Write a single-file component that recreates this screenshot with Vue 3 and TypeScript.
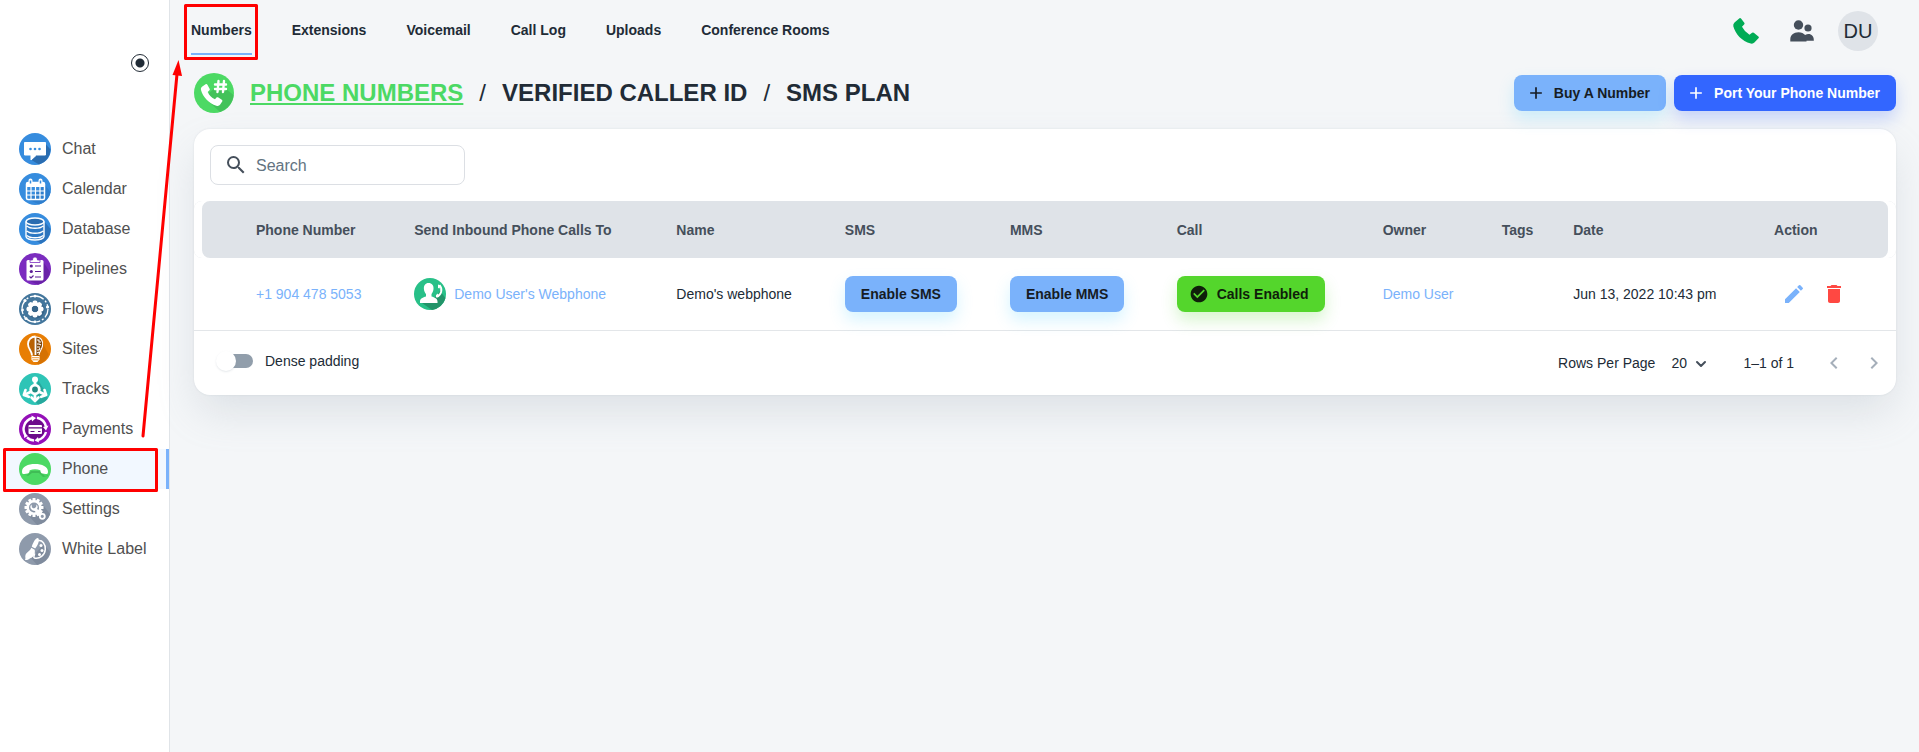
<script setup lang="ts">
import { ref } from 'vue'

interface NavItem { id: string; label: string; color: string }

const navItems: NavItem[] = [
  { id: 'chat', label: 'Chat', color: '#368cde' },
  { id: 'calendar', label: 'Calendar', color: '#368cde' },
  { id: 'database', label: 'Database', color: '#368cde' },
  { id: 'pipelines', label: 'Pipelines', color: '#7b2cbf' },
  { id: 'flows', label: 'Flows', color: '#43769c' },
  { id: 'sites', label: 'Sites', color: '#e87e04' },
  { id: 'tracks', label: 'Tracks', color: '#2ec4b6' },
  { id: 'payments', label: 'Payments', color: '#9410b8' },
  { id: 'phone', label: 'Phone', color: '#4cd964' },
  { id: 'settings', label: 'Settings', color: '#8e9aab' },
  { id: 'white', label: 'White Label', color: '#8e9aab' },
]
const tabs = ['Numbers', 'Extensions', 'Voicemail', 'Call Log', 'Uploads', 'Conference Rooms']
const columns = ['', 'Phone Number', 'Send Inbound Phone Calls To', 'Name', 'SMS', 'MMS', 'Call', 'Owner', 'Tags', 'Date', 'Action']
const teeth = [0, 45, 90, 135, 180, 225, 270, 315]
const cogTeeth = [0, 30, 60, 90, 120, 150, 180, 210, 240, 270, 300, 330]

const activeNav = ref('phone')
const activeTab = ref('Numbers')
const search = ref('')
const dense = ref(false)
const rows = ref('20')
</script>

<template>
  <div class="page">
    <aside class="sidebar">
      <div class="pin-row">
        <input class="pin" type="radio" checked aria-label="Pin sidebar" />
      </div>
      <nav class="side-nav">
        <a
          v-for="item in navItems"
          :key="item.id"
          href="#"
          class="side-link"
          :class="{ active: activeNav === item.id }"
          @click.prevent="activeNav = item.id"
        >
          <svg class="side-icon" viewBox="0 0 32 32" aria-hidden="true">
            <circle cx="16" cy="16" r="16" :fill="item.color" />
            <g v-if="item.id === 'chat'">
              <path d="M26.500 11l5 5.500A16 16 0 0 1 20 31.500L12.500 27z" fill="#2a6cb0" />
              <path d="M5.500 9.500h21v12.500H17.500L12 27v-5H5.500z" fill="#fff" stroke="#fff" stroke-linejoin="round" />
              <g fill="#368cde"><circle cx="11.500" cy="16" r="1.300" /><circle cx="16" cy="16" r="1.300" /><circle cx="20.500" cy="16" r="1.300" /></g>
            </g>
            <g v-else-if="item.id === 'calendar'">
              <path d="M26 12l5.500 7A16 16 0 0 1 20 31.500L9 26z" fill="#2f7fce" />
              <rect x="7.500" y="9.500" width="18" height="17" rx="1.500" fill="none" stroke="#fff" stroke-width="1.500" />
              <path d="M8 10h17v4H8z" fill="#fff" />
              <path d="M8 18h17M8 22h17M12 14v12M16.500 14v12M21 14v12" stroke="#fff" stroke-width="1.200" />
              <path d="M11.500 7.500v3M21.500 7.500v3" stroke="#fff" stroke-width="4" stroke-linecap="round" />
              <path d="M11.500 7.500v3M21.500 7.500v3" stroke="#368cde" stroke-width="1.500" />
            </g>
            <g v-else-if="item.id === 'database'">
              <path d="M25 8l6.500 8A16 16 0 0 1 22 30.800L14 26z" fill="#2b73bc" />
              <path d="M7 8.500v15c0 2 4 3.500 9 3.500s9-1.500 9-3.500v-15" fill="#2d78c3" />
              <ellipse cx="16" cy="8.500" rx="9" ry="3.500" fill="#2a6cb0" stroke="#fff" stroke-width="1.400" />
              <path d="M7 8.500v15c0 2 4 3.500 9 3.500s9-1.500 9-3.500v-15M8 13c1.500 1.500 4.500 2.300 8 2.300s6.500-.8 8-2.300M8 18c1.500 1.500 4.500 2.300 8 2.300s6.500-.8 8-2.300M8 22.500c1.500 1.500 4.500 2.300 8 2.300s6.500-.8 8-2.300" fill="none" stroke="#fff" stroke-width="1.400" />
            </g>
            <g v-else-if="item.id === 'pipelines'">
              <path d="M25 10l6 9A16 16 0 0 1 19 31.700L9 27z" fill="#6a22a8" />
              <rect x="7.500" y="7" width="17" height="20.500" rx="1.500" fill="#fff" />
              <path d="M11 9.500V7h2.500c0-4 5-4 5 0H21v2.500z" fill="#fff" stroke="#7b2cbf" stroke-width="0.800" />
              <path d="M16 13h6M16 18.500h6M16 24h6" stroke="#5d1d96" stroke-width="1.200" />
              <circle cx="12.300" cy="13" r="1.600" fill="#5d1d96" /><circle cx="12.300" cy="18.500" r="1.600" fill="#5d1d96" />
              <path d="M10.500 23.500l1.500 1.500 2.500-2.500" fill="none" stroke="#5d1d96" stroke-width="1.200" />
            </g>
            <g v-else-if="item.id === 'flows'">
              <circle cx="16" cy="16" r="13" fill="none" stroke="#fff" stroke-width="1.300" stroke-dasharray="9 2 2 2 4 1.420" />
              <g fill="#fff"><circle cx="16" cy="3.200" r="1.400" /><circle cx="28.500" cy="14" r="1.600" /><circle cx="7" cy="25.500" r="1.600" /><circle cx="16" cy="28.800" r="1.400" /><circle cx="3.500" cy="17" r="1.400" /><circle cx="6" cy="7.500" r="1.600" /></g>
              <circle cx="17" cy="17" r="8.500" fill="#37658a" />
              <g fill="#fff"><rect v-for="a in teeth" :key="a" x="13.500" y="7.500" width="5" height="5" rx="2" :transform="`rotate(${a} 16 16)`" /></g>
              <circle cx="16" cy="16" r="5" fill="none" stroke="#fff" stroke-width="3.400" />
            </g>
            <g v-else-if="item.id === 'sites'">
              <path d="M23 9l6.500 12a16 16 0 0 1-10 10.500l-6-6z" fill="#d57203" />
              <path d="M13 22.500c0-4-4-6-4-11.500A7.500 7.500 0 0 1 16.500 3.500V22.500z" fill="#b96203" />
              <path d="M16.500 4c5 0 8 4 7 9-1 4-3 5-3.500 9.500h-3.500z" fill="#7d4305" />
              <path d="M16.500 3.500A7.500 7.500 0 0 0 9 11c0 5 4 7 4 11.500M16.500 3.500V22" fill="none" stroke="#fff" stroke-width="1.800" />
              <path d="M17 4c5 0 7.500 4 6.500 9-1 4-3 5-3.500 9M18 7h2v2h2M18 11h2l2 1M18 14h3M18 17h2l1-2M18 20l2-1" fill="none" stroke="#fff" stroke-width="1.100" />
              <path d="M12.500 23h8v3.500l-2 2.500h-4l-2-2.500z" fill="#fff" />
              <path d="M13 24.700h7M13.500 26.800h6" stroke="#e87e04" stroke-width="0.800" />
            </g>
            <g v-else-if="item.id === 'tracks'">
              <path d="M19 7l5 8 4 5 .5 6A16 16 0 0 1 19 31.500L15 27z" fill="#27a89d" />
              <circle cx="16" cy="16.500" r="4.300" fill="#218a81" stroke="#fff" stroke-width="2.800" />
              <circle cx="16" cy="6.500" r="3" fill="#fff" />
              <path d="M16 8v5M16 20v7M12.500 18.500L6 21.500M19.500 18.500L26 21.500" stroke="#fff" stroke-width="2.800" />
              <path d="M12.500 24.500l3.500 3.500 3.500-3.500M6.500 17L4.800 22l5 1.800M25.500 17l1.700 5-5 1.800" fill="none" stroke="#fff" stroke-width="2.600" stroke-linecap="round" stroke-linejoin="round" />
            </g>
            <g v-else-if="item.id === 'payments'">
              <circle cx="16" cy="16" r="10" fill="#6d0b8b" />
              <path d="M6.500 22.500a11.500 11.500 0 0 1 7-17.500M18 4.800a11.500 11.500 0 0 1 9 9M27 19a11.500 11.500 0 0 1-8 8M15 27.500a11.500 11.500 0 0 1-7-3" fill="none" stroke="#fff" stroke-width="2.400" />
              <path d="M12.500 2.500l4.500 2.500-4 3.500zM29.500 12.500L27 17.500l-3-3.500zM20 29.500l-4.500-2 3.500-3.500zM5 25l.5-5 3.500 3z" fill="#fff" />
              <rect x="9.500" y="12" width="13.500" height="9" rx="1" fill="#fff" />
              <path d="M9.500 14.800h13.500M11.500 18.500h4M19 18.500h2.500" stroke="#640a80" stroke-width="1.200" />
            </g>
            <g v-else-if="item.id === 'phone'">
              <path d="M5 21l3 1 4-4h9l5 5 3-1v1l-5 1-4-4h-7l-4 3z" fill="#40bd56" />
              <path d="M3 18.500c0-5 6-7.500 13-7.500s13 2.500 13 7.500c0 2.200-.8 2.800-2.500 2.500l-3-.5c-1.500-.3-2-1.300-2.200-3.300-3.500-1.300-7-1.300-10.600 0-.2 2-.7 3-2.200 3.300l-3 .5C3.800 21.300 3 20.700 3 18.500z" fill="#fff" />
            </g>
            <g v-else-if="item.id === 'settings'">
              <path d="M24 12l7 9A16 16 0 0 1 18 32L9 22z" fill="#7f8b9d" />
              <g fill="#fff"><rect v-for="a in cogTeeth" :key="a" x="13.500" y="5" width="3" height="4" rx="0.500" :transform="`rotate(${a} 15 14.500)`" /></g>
              <circle cx="15" cy="14.500" r="6.300" fill="none" stroke="#fff" stroke-width="2.600" />
              <path d="M15.500 15.500l6.500 6.500" stroke="#fff" stroke-width="3.200" />
              <path d="M12.500 11.500a3.500 3.500 0 1 0 5 0l-.5 3-2 1-2-1z" fill="#fff" />
              <circle cx="23.300" cy="23.300" r="2.500" fill="#8e9aab" stroke="#fff" stroke-width="1.800" />
            </g>
            <g v-else>
              <path d="M25 11l6 8A16 16 0 0 1 18 32l-6-7z" fill="#7f8b9d" />
              <path d="M18.500 7.800c5-1.500 8.200 3.700 7.800 8.700-.5 6-5.800 9.500-10.800 8.500-2-1 .5-2.500 0-4.500" fill="none" stroke="#fff" stroke-width="1.500" />
              <g fill="#fff"><circle cx="22" cy="12.500" r="1.500" /><circle cx="23" cy="17.500" r="1.500" /><circle cx="20.500" cy="21.500" r="1.500" /></g>
              <path d="M18.500 5c2.500 0 1.500 6-2.300 10.500l-3.400-1.700C14 9 17 5 18.500 5zM12.300 14.800l3.400 1.900c.8 4-1.200 7.800-4.200 8.300-1.500 1.500-3.500 2.300-5.500 2 1-2-.2-3 .5-5 1-3 4-3 5.800-7.200z" fill="#fff" />
            </g>
          </svg>
          <span>{{ item.label }}</span>
        </a>
      </nav>
    </aside>

    <main class="main">
      <header class="topbar">
        <nav class="tabs">
          <a
            v-for="tab in tabs"
            :key="tab"
            href="#"
            class="tab"
            :class="{ current: activeTab === tab }"
            @click.prevent="activeTab = tab"
          >{{ tab }}</a>
        </nav>
        <div class="top-actions">
          <button class="plain" aria-label="Dialer">
            <svg width="28" height="28" viewBox="0 0 28 28"><path d="M2.500 5.500L7.500 1.200Q8.300.7 9 1.400l3.300 4.300q.7.900-.2 1.800L10 9.700Q12.500 14.700 17.500 17.700l2.600-1.900q.9-.6 1.700 0l4.600 3.700q.9.700.3 1.600l-4.300 4.500q-1.500 1.600-3.600 1C9.800 24.200 3.300 17 1.300 9.300q-.4-2.300 1.200-3.800z" fill="#00ab55" /></svg>
          </button>
          <button class="plain" aria-label="Contacts">
            <svg width="24" height="24" viewBox="0 0 24 24" fill="#454f5b"><circle cx="8.500" cy="6" r="4.700" /><circle cx="18" cy="9" r="3.600" /><path d="M.3 22.500v-2.300c0-4 3.200-7 8.200-7 3 0 5.200 1.200 6.600 2.700 5-2.300 8.700.6 8.700 5v.8H16.500v.8z" /></svg>
          </button>
          <button class="avatar" aria-label="Account">DU</button>
        </div>
      </header>

      <div class="title-row">
        <svg class="title-icon" viewBox="0 0 40 40" aria-hidden="true">
          <circle cx="20" cy="20" r="20" fill="#4cd964" />
          <path d="M15 20l7-6 10 2 7.500 6A20 20 0 0 1 26 39.100L14 28z" fill="#43c25a" />
          <path d="M8.300 13.500l3.300-2.200c.7-.4 1.400-.3 1.800.4l2.200 4c.4.700.2 1.400-.4 1.900l-1.500 1.400c1.300 3.300 3.900 5.800 7.300 7.200l1.500-1.600c.5-.5 1.200-.6 1.900-.2l3.400 2.300c.7.500.8 1.200.4 1.900l-2 3c-.8 1.300-2.300 1.700-3.800 1.200C14.700 30.500 8.700 23.500 7 17c-.4-1.400.1-2.700 1.300-3.500z" fill="#fff" />
          <path d="M24.500 8l-1 11M30 8l-1 11M21 11.500h11M21 16h11" stroke="#fff" stroke-width="2.400" stroke-linecap="round" />
        </svg>
        <h1 class="crumbs">
          <a href="#" class="crumb selected">PHONE NUMBERS</a>
          <span class="slash">/</span>
          <a href="#" class="crumb">VERIFIED CALLER ID</a>
          <span class="slash">/</span>
          <a href="#" class="crumb">SMS PLAN</a>
        </h1>
        <div class="title-actions">
          <button class="btn sky"><svg viewBox="0 0 24 24"><path d="M19 13h-6v6h-2v-6H5v-2h6V5h2v6h6v2z" /></svg>Buy A Number</button>
          <button class="btn royal"><svg viewBox="0 0 24 24"><path d="M19 13h-6v6h-2v-6H5v-2h6V5h2v6h6v2z" /></svg>Port Your Phone Number</button>
        </div>
      </div>

      <section class="card">
        <label class="search">
          <svg width="24" height="24" viewBox="0 0 24 24" fill="#454f5b" aria-hidden="true"><path d="M15.500 14h-.79l-.28-.27A6.471 6.471 0 0 0 16 9.500 6.500 6.500 0 1 0 9.500 16c1.610 0 3.090-.59 4.230-1.570l.27.28v.79l5 4.990L20.490 19l-4.990-5zm-6 0C7.010 14 5 11.990 5 9.500S7.010 5 9.500 5 14 7.010 14 9.500 11.990 14 9.500 14z" /></svg>
          <input v-model="search" type="text" placeholder="Search" aria-label="Search" />
        </label>

        <table class="numbers">
          <colgroup>
            <col v-for="(c, i) in columns" :key="i" :class="`col-${i}`" />
          </colgroup>
          <thead>
            <tr><th v-for="(c, i) in columns" :key="i" scope="col">{{ c }}</th></tr>
          </thead>
          <tbody>
            <tr>
              <td></td>
              <td><a href="#" class="link">+1 904 478 5053</a></td>
              <td>
                <a href="#" class="link target">
                  <svg width="32" height="32" viewBox="0 0 32 32" aria-hidden="true">
                    <circle cx="16" cy="16" r="16" fill="#28c088" />
                    <path d="M26 13l5.500 7A16 16 0 0 1 18 32L8 25l14-6z" fill="#229469" />
                    <path d="M14.500 5c3.500 0 5.300 2.500 5 6-.2 2.500-1.300 4-2 5v2.500c3 .8 6 2 6 5V25H6v-1.500c0-3 3-4.200 6-5V16c-.8-1-1.900-2.500-2.100-5-.3-3.500 1.600-6 4.600-6z" fill="#fff" />
                    <path d="M25.500 7c3.500 4 2 10-3 12" fill="none" stroke="#fff" stroke-width="1.800" />
                    <path d="M24 6.500l2.500 1-1 3-1.500-.5zM22 17l2-1.500 1 2.500-3 1.500z" fill="#fff" />
                  </svg>
                  Demo User's Webphone
                </a>
              </td>
              <td>Demo's webphone</td>
              <td><button class="btn sky">Enable SMS</button></td>
              <td><button class="btn sky">Enable MMS</button></td>
              <td>
                <button class="btn green"><svg viewBox="0 0 24 24"><path d="M12 2C6.480 2 2 6.480 2 12s4.480 10 10 10 10-4.480 10-10S17.520 2 12 2zm-2 15l-5-5 1.410-1.410L10 14.170l7.590-7.590L19 8l-9 9z" /></svg>Calls Enabled</button>
              </td>
              <td><a href="#" class="link">Demo User</a></td>
              <td></td>
              <td>Jun 13, 2022 10:43 pm</td>
              <td>
                <div class="row-actions">
                  <button class="icon-btn" aria-label="Edit"><svg width="24" height="24" viewBox="0 0 24 24" fill="#7ab2fb"><path d="M3 17.250V21h3.750L17.810 9.940l-3.750-3.750L3 17.250zM20.710 7.040a.996.996 0 0 0 0-1.410l-2.340-2.340a.996.996 0 0 0-1.410 0l-1.830 1.830 3.750 3.750 1.830-1.830z" /></svg></button>
                  <button class="icon-btn" aria-label="Delete"><svg width="24" height="24" viewBox="0 0 24 24" fill="#ff4842"><path d="M6 19c0 1.100.9 2 2 2h8c1.100 0 2-.9 2-2V7H6v12zM19 4h-3.500l-1-1h-5l-1 1H5v2h14V4z" /></svg></button>
                </div>
              </td>
            </tr>
          </tbody>
        </table>

        <footer class="card-footer">
          <label class="dense"><input v-model="dense" type="checkbox" class="switch" />Dense padding</label>
          <div class="pager">
            <label for="rows">Rows Per Page</label>
            <span class="select-wrap">
              <select id="rows" v-model="rows"><option>20</option><option>50</option></select>
              <svg width="16" height="16" viewBox="0 0 16 16" aria-hidden="true"><path d="M4 6l4 4 4-4" fill="none" stroke="#454f5b" stroke-width="2" stroke-linecap="round" stroke-linejoin="round" /></svg>
            </span>
            <span class="range">1–1 of 1</span>
            <button class="icon-btn" disabled aria-label="Previous page"><svg width="24" height="24" viewBox="0 0 24 24" fill="#a5afba"><path d="M15.410 16.590L10.830 12l4.580-4.590L14 6l-6 6 6 6z" /></svg></button>
            <button class="icon-btn" disabled aria-label="Next page"><svg width="24" height="24" viewBox="0 0 24 24" fill="#a5afba"><path d="M8.590 16.590L13.170 12 8.590 7.410 10 6l6 6-6 6z" /></svg></button>
          </div>
        </footer>
      </section>
    </main>

    <svg class="callouts" width="262" height="500" viewBox="0 0 262 500" aria-hidden="true">
      <g fill="none" stroke="#f00" stroke-width="3" stroke-linejoin="round">
        <rect x="185.500" y="5.500" width="71" height="53" />
        <rect x="4.500" y="449.500" width="152" height="41" />
        <path d="M143 436L177 74" stroke-linecap="round" />
      </g>
      <path d="M178.500 60l3.500 16-9.500-1z" fill="#f00" />
    </svg>
  </div>
</template>

<style>
body { margin: 0; background: #f4f6f8; }
</style>

<style scoped>
.page {
  position: relative;
  display: flex;
  min-height: 100vh;
  font-family: "Liberation Sans", Arial, sans-serif;
  font-size: 14px;
  line-height: 22px;
  color: #212b36;
  background: #f4f6f8;
}
.page *, .page *::before { box-sizing: border-box; }
button { font: inherit; color: inherit; border: 0; background: none; padding: 0; cursor: pointer; }
a { text-decoration: none; color: inherit; }
svg { display: block; flex: none; }

.sidebar { width: 170px; flex: none; background: #fff; border-right: 1px solid #e0e4e8; }
.pin-row { display: flex; justify-content: flex-end; height: 129px; padding: 54px 20px 0 0; }
.pin {
  appearance: none;
  width: 18px;
  height: 18px;
  margin: 0;
  border: 1px solid #212b36;
  border-radius: 50%;
  background: radial-gradient(circle, #212b36 4px, transparent 5px);
}
.side-nav { display: flex; flex-direction: column; }
.side-link {
  display: flex;
  align-items: center;
  gap: 11px;
  height: 40px;
  margin-left: 4px;
  padding-left: 15px;
  font-size: 16px;
  color: #505050;
  white-space: nowrap;
}
.side-link.active { background: #f2f8ff; border-right: 3px solid #7ab2fb; }
.side-icon { width: 32px; height: 32px; }

.main { flex: 1; min-width: 0; padding: 0 23px 24px 24px; }
.topbar { display: flex; align-items: center; justify-content: space-between; height: 62px; }
.tabs { display: flex; gap: 40px; margin-left: -3px; }
.tab { height: 48px; line-height: 46px; font-weight: 700; border-bottom: 2px solid transparent; white-space: nowrap; }
.tab.current { border-color: #7ab2fb; }
.top-actions { display: flex; align-items: center; gap: 28px; padding-right: 18px; }
.plain:first-child { margin-right: 2px; }
.avatar { width: 40px; height: 40px; border-radius: 50%; background: #dfe3e8; font-size: 20px; margin-left: -4px; }

.title-row { display: flex; align-items: center; margin: 11px 0 16px; }
.title-icon { width: 40px; height: 40px; }
.crumbs { display: flex; gap: 16px; margin: 0 0 0 16px; font-size: 24px; line-height: 36px; white-space: nowrap; }
.crumb.selected { color: #4cd964; text-decoration: underline; }
.slash { font-weight: 400; }
.title-actions { display: flex; gap: 8px; margin-left: auto; }

.btn {
  display: inline-flex;
  align-items: center;
  gap: 8px;
  height: 36px;
  padding: 0 16px;
  border-radius: 8px;
  font-weight: 700;
  white-space: nowrap;
  color: #161c24;
}
.btn svg { width: 20px; height: 20px; margin-left: -4px; fill: currentColor; }
.sky { background: #7ab2fb; box-shadow: 0 8px 16px rgba(80, 210, 255, 0.24); }
.royal { background: #3366ff; color: #fff; box-shadow: 0 8px 16px rgba(51, 102, 255, 0.24); }
.green { background: #54d62c; color: #0f1f0a; box-shadow: 0 8px 16px rgba(84, 214, 44, 0.24); }

.card {
  padding-top: 16px;
  background: #fff;
  border-radius: 16px;
  box-shadow: 0 0 2px rgba(145, 158, 171, 0.24), 0 20px 40px -4px rgba(145, 158, 171, 0.24);
}
.search {
  display: flex;
  align-items: center;
  gap: 8px;
  width: 255px;
  height: 40px;
  margin: 0 0 16px 16px;
  padding: 0 13px;
  border: 1px solid #dcdfe4;
  border-radius: 8px;
}
.search input { flex: 1; min-width: 0; padding: 2px 0 0; border: 0; outline: 0; background: none; font: inherit; font-size: 16px; color: #212b36; }
.search input::placeholder { color: #637381; opacity: 1; }

.numbers { width: 100%; table-layout: fixed; border-collapse: separate; border-spacing: 0; }
.col-0 { width: 2.7%; }
.col-1 { width: 9.3%; }
.col-2 { width: 15.4%; }
.col-3 { width: 9.9%; }
.col-4 { width: 9.7%; }
.col-5 { width: 9.8%; }
.col-6 { width: 12.1%; }
.col-7 { width: 7%; }
.col-8 { width: 4.2%; }
.col-9 { width: 11.8%; }
.numbers th { height: 57px; padding: 0 0 0 16px; text-align: left; color: #454f5b; background: #dfe3e8; white-space: nowrap; }
.numbers th:first-child { border-radius: 8px 0 0 8px; box-shadow: inset 8px 0 0 #fff; }
.numbers th:last-child { border-radius: 0 8px 8px 0; box-shadow: inset -8px 0 0 #fff; }
.numbers td { height: 73px; padding: 0 0 0 16px; border-bottom: 1px solid #e3e6e9; white-space: nowrap; }
.link { color: #7ab2fb; }
.target { display: flex; align-items: center; gap: 8px; }
.row-actions { display: flex; }
.icon-btn { padding: 8px; }

.card-footer { display: flex; align-items: center; justify-content: space-between; height: 64px; padding: 0 2px 0 22px; }
.dense { display: flex; align-items: center; gap: 12px; padding-bottom: 4px; }
.switch {
  position: relative;
  appearance: none;
  width: 34px;
  height: 14px;
  margin: 0 0 0 3px;
  border-radius: 7px;
  background: #919eab;
}
.switch::before {
  content: "";
  position: absolute;
  top: -3px;
  left: -3px;
  width: 20px;
  height: 20px;
  border-radius: 50%;
  background: #fff;
  box-shadow: 0 1px 2px rgba(145, 158, 171, 0.24);
}
.switch:checked::before { left: 17px; }
.pager { display: flex; align-items: center; }
.select-wrap { position: relative; margin: 0 32px 0 8px; }
.select-wrap select { appearance: none; width: 48px; height: 24px; padding: 0 24px 0 8px; border: 0; background: none; font: inherit; color: inherit; }
.select-wrap svg { position: absolute; top: 5px; right: 2px; pointer-events: none; }
.range { margin-right: 20px; }

.callouts { position: absolute; top: 0; left: 0; pointer-events: none; }
</style>
